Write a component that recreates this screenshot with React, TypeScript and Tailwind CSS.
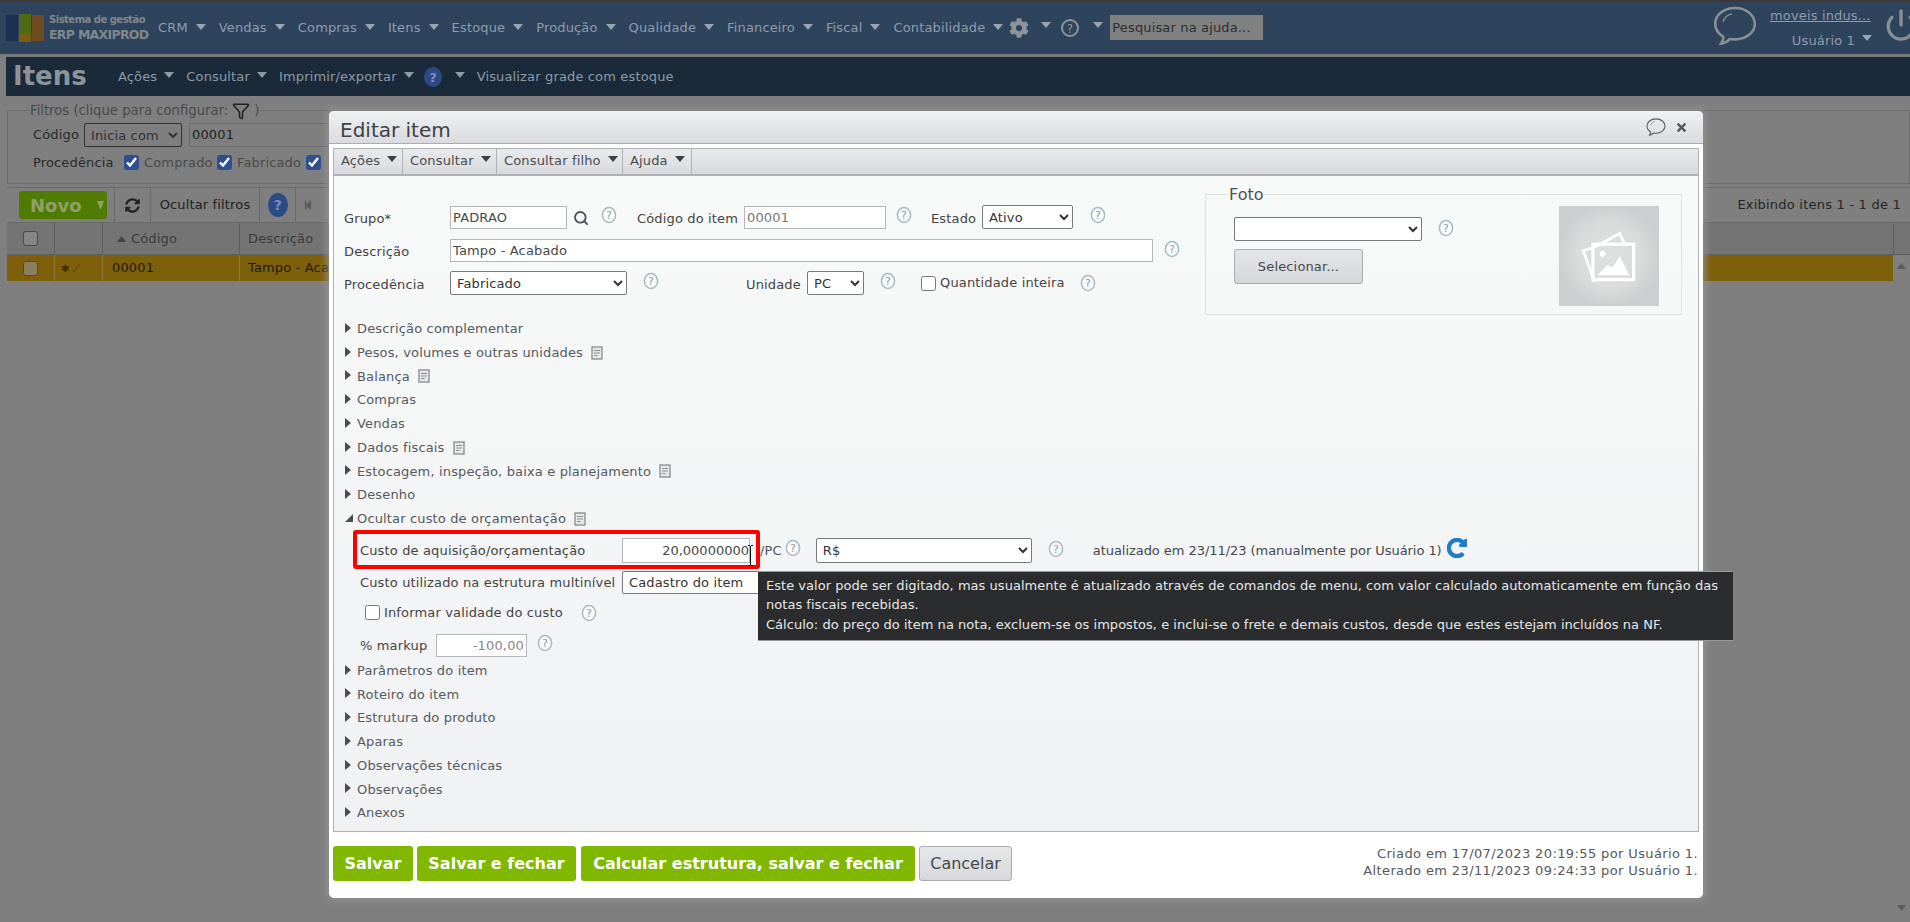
import React from "react";
import { FaCog, FaStepBackward, FaTimes, FaSyncAlt, FaRedoAlt } from "react-icons/fa";
import { Power, Search, Filter } from "lucide-react";

const Caret = ({ c = "#9aa5b0", w = 10, h = 6, className = "" }: { c?: string; w?: number; h?: number; className?: string }) => (
  <svg width={w} height={h} viewBox="0 0 10 6" preserveAspectRatio="none" className={"shrink-0 " + className}>
    <path d="M0 0H10L5 6Z" fill={c} />
  </svg>
);

const Help = ({ className = "" }: { className?: string }) => (
  <svg width="16" height="18" viewBox="0 0 16 18" className={"shrink-0 " + className}>
    <ellipse cx="8" cy="9" rx="6.6" ry="7.4" fill="#fbfcfc" stroke="#a6bac6" strokeWidth="1.5" />
    <text x="8" y="13" textAnchor="middle" fontSize="11" fill="#8f9aa0" fontFamily="DejaVu Sans">?</text>
  </svg>
);

const Doc = () => (
  <svg width="12" height="14" viewBox="0 0 12 14" className="ml-[8px] shrink-0">
    <rect x="1" y="1" width="10" height="12" fill="#e6e8e8" stroke="#8f9295" strokeWidth="1.4" />
    <path d="M3 4.5H9M3 7H9M3 9.5H6.5" stroke="#8f9295" strokeWidth="1" />
  </svg>
);

const Chat = ({ size, stroke, sw }: { size: number; stroke: string; sw: number }) => (
  <svg width={size} height={size * 0.9} viewBox="0 0 44 40" fill="none" className="shrink-0">
    <path d="M22 2C10.5 2 2 9 2 18c0 5.5 3.2 10 8 13 .5 2.5-.5 5-2 7 3.5-.5 7-2.5 9-4.7 1.6.3 3.3.4 5 .4 11.5 0 20-7 20-15.7S33.5 2 22 2Z" stroke={stroke} strokeWidth={sw} />
    <path d="M10 16c1-4 4-7 9-8" stroke={stroke} strokeWidth={sw * 0.5} />
  </svg>
);

const TopItem = ({ label }: { label: string }) => (
  <div className="flex items-center">
    <span>{label}</span>
    <Caret className="ml-[8px] -mt-[3px] mr-[13px]" />
  </div>
);

const MenuCell = ({ label, w }: { label: string; w: string }) => (
  <div className={"flex items-center pl-[7px] h-full border-r border-[#aeb1b5] " + w}>
    <span className="-mt-[2px]">{label}</span>
    <Caret c="#3c3f44" className="ml-[7px] -mt-[5px]" />
  </div>
);

const Row = ({ label, doc, open }: { label: string; doc?: boolean; open?: boolean }) => (
  <div className="flex items-center h-[23.75px] pl-[11px] text-[#555a5e]">
    <svg width="12" height="10" viewBox="0 0 12 10" className="shrink-0 -mt-[2px]">
      {open ? <path d="M0 9H8V1Z" fill="#4a4d50" /> : <path d="M0 0L6 5L0 10Z" fill="#4a4d50" />}
    </svg>
    <span>{label}</span>
    {doc && <Doc />}
  </div>
);

const inputCls = "h-full bg-white border border-[#b4b7ba] px-[2px] text-[#44484c] outline-none font-['DejaVu_Sans',sans-serif] text-[13px]";
const selectCls = "h-full bg-white border border-[#77797c] rounded-[2px] text-[#333] font-['DejaVu_Sans',sans-serif] text-[13px] pl-[2px]";
const dimBox = "h-[15px] w-[15px] appearance-none rounded-[3px] border border-[#4a4a4a] bg-[#868686]";

export default function App() {
  return (
    <div className="relative h-[922px] w-[1910px] overflow-hidden bg-[#7f7f7f] font-['DejaVu_Sans',sans-serif] text-[13px] tracking-[0.15px] text-[#2e3033]">
      {/* page behind the dialog */}
      <div className="h-[2px] bg-[#3b3837]" />
      <header className="flex h-[52px] items-center bg-[#2e435c] text-[#8e9cac]">
        <svg width="38" height="28" viewBox="0 0 38 28" className="ml-[6px] shrink-0">
          <rect x="0" y="1" width="12" height="26" fill="#1b2f52" />
          <rect x="13" y="0" width="12" height="20" fill="#4f6a14" />
          <rect x="13" y="20" width="12" height="8" fill="#7a5f12" />
          <rect x="26" y="1" width="12" height="26" fill="#6e4c20" />
        </svg>
        <div className="ml-[5px] w-[109px] shrink-0 whitespace-nowrap font-bold leading-none tracking-normal text-[#80888f]">
          <div className="mb-[4px] text-[10px] tracking-[-0.5px]">Sistema de gestão</div>
          <div className="text-[12.5px] tracking-[-0.7px]">ERP MAXIPROD</div>
        </div>
        <div className="flex shrink-0 items-center whitespace-nowrap">
          {["CRM", "Vendas", "Compras", "Itens", "Estoque", "Produção", "Qualidade", "Financeiro", "Fiscal", "Contabilidade"].map((l) => (
            <TopItem key={l} label={l} />
          ))}
        </div>
        <FaCog size={20} className="-ml-[7px] shrink-0 text-[#8e9498]" />
        <Caret className="ml-[12px] -mt-[6px]" />
        <svg width="20" height="20" viewBox="0 0 20 20" className="ml-[9px] shrink-0">
          <circle cx="10" cy="10" r="8" fill="none" stroke="#8e9498" strokeWidth="2" />
          <text x="10" y="14.5" textAnchor="middle" fontSize="12" fill="#8e9498" fontFamily="DejaVu Sans">?</text>
        </svg>
        <Caret className="ml-[13px] -mt-[6px]" />
        <div className="ml-[7px] -mt-[1px] flex h-[25px] w-[153px] shrink-0 items-center whitespace-nowrap bg-[#808080] pl-[2px] text-[#2c2f33]">Pesquisar na ajuda...</div>
        <div className="flex-1" />
        <div className="shrink-0 -mt-[4px]"><Chat size={44} stroke="#8a8f92" sw={2.6} /></div>
        <div className="ml-[13px] w-[102px] shrink-0 whitespace-nowrap">
          <div className="underline text-[#8e9ca9]">moveis indus...</div>
          <div className="mt-[5px] flex items-center justify-end">
            <span>Usuário 1</span>
            <Caret className="ml-[7px] -mt-[4px]" />
          </div>
        </div>
        <Power size={34} strokeWidth={2.4} className="ml-[12px] -mr-[8px] -mt-[6px] shrink-0 text-[#8a8f92]" />
      </header>
      <div className="h-[3px] bg-[#7a7a7a]" />
      <div className="ml-[6px] flex h-[39px] items-center bg-[#1a2a3a] text-[#8e9aa5]">
        <span className="ml-[7px] w-[105px] text-[26px] font-bold tracking-normal text-[#8c949a]">Itens</span>
        <span>Ações</span><Caret c="#8e9aa5" className="ml-[7px] -mt-[4px]" />
        <span className="ml-[12px]">Consultar</span><Caret c="#8e9aa5" className="ml-[7px] -mt-[4px]" />
        <span className="ml-[12px]">Imprimir/exportar</span><Caret c="#8e9aa5" className="ml-[7px] -mt-[4px]" />
        <svg width="18" height="20" viewBox="0 0 18 20" className="ml-[10px] shrink-0">
          <ellipse cx="9" cy="10" rx="9" ry="10" fill="#2c4a85" />
          <text x="9" y="15" textAnchor="middle" fontSize="13" fontWeight="700" fill="#7f8fb0" fontFamily="DejaVu Sans">?</text>
        </svg>
        <Caret c="#8e9aa5" className="ml-[13px] -mt-[4px]" />
        <span className="ml-[12px]">Visualizar grade com estoque</span>
      </div>

      <div className="ml-[7px]">
        <fieldset className="mt-[5px] h-[83px] border border-[#6c6c6c]">
          <legend className="ml-[21px] flex items-center px-[1px] text-[13.2px] leading-[19px] tracking-normal text-[#4a4a4a]">
            Filtros (clique para configurar: <Filter size={18} className="mx-[4px] text-[#222]" />)
          </legend>
          <div className="mt-[3px] flex h-[24px] items-center pl-[25px]">
            <span className="w-[51px] text-[#2a2a2a]">Código</span>
            <select className={selectCls + " w-[98px] !border-[#333] !bg-[#7f7f7f]"} defaultValue="a">
              <option value="a">Inicia com</option>
            </select>
            <div className="ml-[7px] h-full w-[141px] border border-[#6a6a6a] px-[2px] leading-[22px] text-[#222]">00001</div>
          </div>
          <div className="mt-[6px] flex items-center pl-[25px]">
            <span className="w-[91px] text-[#2a2a2a]">Procedência</span>
            <input type="checkbox" defaultChecked className="h-[15px] w-[15px] accent-[#2f4f8f]" />
            <span className="ml-[5px] w-[73px] text-[#4a4a4a]">Comprado</span>
            <input type="checkbox" defaultChecked className="h-[15px] w-[15px] accent-[#2f4f8f]" />
            <span className="ml-[5px] w-[69px] text-[#4a4a4a]">Fabricado</span>
            <input type="checkbox" defaultChecked className="h-[15px] w-[15px] accent-[#2f4f8f]" />
          </div>
        </fieldset>
        <div className="mt-[3px] flex h-[36px] items-center border-t border-b border-[#6a6a6a] pl-[12px]">
          <div className="flex h-[28px] w-[88px] items-center rounded-[3px] bg-[#4f7c00] pl-[11px] text-[18px] font-bold tracking-normal text-[#8f9f6a]">
            Novo
            <Caret c="#8f9f6a" w={7} h={9} className="ml-[15px]" />
          </div>
          <div className="ml-[7px] flex h-full w-[37px] items-center justify-center border-x border-[#6a6a6a]">
            <FaSyncAlt size={15} className="text-[#222]" />
          </div>
          <div className="flex h-full w-[109px] items-center justify-center border-r border-[#6a6a6a] text-[#222]">Ocultar filtros</div>
          <div className="flex h-full w-[36px] items-center justify-center border-r border-[#6a6a6a]">
            <svg width="20" height="24" viewBox="0 0 20 24"><ellipse cx="10" cy="12" rx="10" ry="12" fill="#2c4a85" /><text x="10" y="17" textAnchor="middle" fontSize="14" fontWeight="700" fill="#7f8fb0" fontFamily="DejaVu Sans">?</text></svg>
          </div>
          <FaStepBackward size={10} className="ml-[7px] text-[#5a5a5a]" />
          <span className="ml-auto mr-[9px] tracking-[0.22px] text-[#262626]">Exibindo itens 1 - 1 de 1</span>
        </div>
        <div className="flex h-[32px] items-center border-b border-[#5f5f5f] bg-[#747474] text-[#3a3a3a]">
          <div className="flex h-full w-[48px] items-center justify-center border-r border-[#5f5f5f]"><input type="checkbox" className={dimBox} /></div>
          <div className="h-full w-[48px] border-r border-[#5f5f5f]" />
          <div className="flex h-full w-[137px] items-center border-r border-[#5f5f5f] pl-[14px]"><Caret c="#444" w={9} h={6} className="mr-[5px] rotate-180" />Código</div>
          <div className="flex h-full flex-1 items-center pl-[8px]">Descrição</div>
          <div className="h-full w-[17px] border-l border-[#5f5f5f]" />
        </div>
        <div className="mr-[17px] flex h-[26px] items-center bg-[#7e5f0a] text-[#1f1a08]">
          <div className="flex h-full w-[48px] items-center justify-center border-r border-[#8f7a3a]"><input type="checkbox" className={dimBox + " !bg-[#8a7f60]"} /></div>
          <div className="flex h-full w-[48px] items-center border-r border-[#8f7a3a] pl-[6px] text-[10px] text-[#3a2c00]">✱ ⟋</div>
          <div className="flex h-full w-[137px] items-center border-r border-[#8f7a3a] pl-[9px]">00001</div>
          <div className="flex h-full flex-1 items-center pl-[8px]">Tampo - Acabado</div>
        </div>
      </div>
      <Caret c="#5c5c5c" w={9} h={6} className="absolute right-[4px] top-[263px] rotate-180" />
      <Caret c="#5c5c5c" w={9} h={6} className="absolute right-[4px] top-[905px]" />

      {/* dialog */}
      <div className="absolute left-[329px] top-[111px] flex h-[787px] w-[1374px] flex-col rounded-[5px] bg-white shadow-[0_0_7px_3px_rgba(150,150,150,0.75)]">
        <div className="flex h-[33px] items-center rounded-t-[5px] border-b border-[#a9adb1] bg-linear-to-b from-[#eff0f2] to-[#dadbde] pl-[11px]">
          <span className="mt-[6px] text-[20px] tracking-normal text-[#3e4146]">Editar item</span>
          <div className="ml-auto"><Chat size={20} stroke="#55585c" sw={2.4} /></div>
          <FaTimes size={13} className="ml-[9px] mr-[15px] text-[#55585c]" />
        </div>
        <div className="mx-[4px] mt-[4px] flex h-[684px] flex-col border border-[#adb2b6] bg-linear-to-b from-[#f8faf9] to-[#f0f1f3]">
          <div className="flex h-[27px] shrink-0 items-center border-b-2 border-[#aeb1b8] bg-linear-to-b from-[#e9eaec] to-[#d9dade] text-[#484c50]">
            <MenuCell label="Ações" w="w-[69px]" />
            <MenuCell label="Consultar" w="w-[94px]" />
            <MenuCell label="Consultar filho" w="w-[126px]" />
            <MenuCell label="Ajuda" w="w-[69px]" />
          </div>

          <div className="flex pt-[9px]">
            <div className="w-[871px] pt-[20px]">
              <div className="flex h-[24px] items-center">
                <span className="ml-[10px] w-[106px] pt-[4px] text-[#444]">Grupo*</span>
                <input readOnly value="PADRAO" className={inputCls + " !h-[23px] w-[117px]"} />
                <Search size={16} strokeWidth={2.8} className="ml-[6px] mt-[2px] text-[#4e5256]" />
                <Help className="ml-[12px] -mt-[4px]" />
                <span className="ml-[20px] w-[107px] pt-[4px] text-[#444]">Código do item</span>
                <input readOnly value="00001" className={inputCls + " !h-[23px] w-[142px] !text-[#777]"} />
                <Help className="ml-[10px] -mt-[4px]" />
                <span className="ml-[19px] w-[51px] pt-[4px] text-[#444]">Estado</span>
                <select className={selectCls + " w-[91px]"}><option>Ativo</option></select>
                <Help className="ml-[17px] -mt-[4px]" />
              </div>
              <div className="mt-[10px] flex h-[23px] items-center">
                <span className="ml-[10px] w-[106px] pt-[2px] text-[#444]">Descrição</span>
                <input readOnly value="Tampo - Acabado" className={inputCls + " w-[703px]"} />
                <Help className="ml-[11px] -mt-[4px]" />
              </div>
              <div className="mt-[9px] flex h-[24px] items-center">
                <span className="ml-[10px] w-[106px] pt-[3px] text-[#444]">Procedência</span>
                <select className={selectCls + " w-[177px]"}><option>Fabricado</option></select>
                <Help className="ml-[16px] -mt-[4px]" />
                <span className="ml-[87px] w-[61px] pt-[3px] text-[#444]">Unidade</span>
                <select className={selectCls + " w-[57px]"}><option>PC</option></select>
                <Help className="ml-[16px] -mt-[4px]" />
                <input type="checkbox" className="ml-[25px] h-[15px] w-[15px]" />
                <span className="ml-[4px] w-[140px] whitespace-nowrap text-[#444]">Quantidade inteira</span>
                <Help />
              </div>
            </div>
            <fieldset className="h-[130px] w-[477px] border border-[#dfe2e2]">
              <legend className="ml-[22px] px-[1px] text-[16px] leading-[19px] tracking-normal text-[#4c5054]">Foto</legend>
              <div className="flex">
                <div className="w-[353px] pl-[28px]">
                  <div className="mt-[13px] flex h-[24px] items-center">
                    <select className={selectCls + " w-[188px]"}><option></option></select>
                    <Help className="ml-[16px] -mt-[2px]" />
                  </div>
                  <div className="mt-[8px] flex h-[35px] w-[129px] items-center justify-center rounded-[3px] border border-[#a9abae] bg-linear-to-b from-[#e4e5e7] to-[#d6d7da] text-[#44484c]">Selecionar...</div>
                </div>
                <div className="mt-[2px] flex h-[100px] w-[100px] items-center justify-center bg-[radial-gradient(circle,#dedfdf_0%,#dadbdb_45%,#cdcecf_72%)]">
                  <svg width="60" height="54" viewBox="0 0 56 50" fill="none">
                    <path d="M14 17 L4 20 L14 48 L20 46 M14 17 L38 4 L42 13" stroke="#fff" strokeWidth="2.6" />
                    <rect x="13" y="14" width="38" height="33" stroke="#fff" strokeWidth="3" />
                    <circle cx="22" cy="23" r="2.8" fill="#fff" />
                    <path d="M17 43 L27 33 L31 36 L38 25 L47 43Z" fill="#fff" />
                  </svg>
                </div>
              </div>
            </fieldset>
          </div>

          <div className="mt-[2px]">
            <Row label="Descrição complementar" />
            <Row label="Pesos, volumes e outras unidades" doc />
            <Row label="Balança" doc />
            <Row label="Compras" />
            <Row label="Vendas" />
            <Row label="Dados fiscais" doc />
            <Row label="Estocagem, inspeção, baixa e planejamento" doc />
            <Row label="Desenho" />
            <Row label="Ocultar custo de orçamentação" doc open />
          </div>

          <div className="relative mt-[7px] flex h-[25px] items-center">
            <span className="ml-[26px] w-[262px] text-[#444]">Custo de aquisição/orçamentação</span>
            <input readOnly value="20,00000000" className={inputCls + " w-[128px] !pr-0 text-right tracking-normal"} />
            <span className="ml-[10px] text-[#555]">/PC</span>
            <Help className="ml-[3px] -mt-[4px]" />
            <select className={selectCls + " ml-[15px] w-[216px]"}><option>R$</option></select>
            <Help className="ml-[16px] -mt-[2px]" />
            <span className="ml-[29px] whitespace-nowrap tracking-[-0.05px] text-[#44484c]">atualizado em 23/11/23 (manualmente por Usuário 1)</span>
            <FaRedoAlt size={20} stroke="currentColor" strokeWidth={30} className="ml-[5px] -mt-[4px] text-[#1d7ec9]" />
            <div className="absolute left-[19px] -top-[8px] h-[39px] w-[407px] rounded-[3px] border-4 border-[#fe0000]" />
            <svg width="7" height="21" viewBox="0 0 7 21" className="absolute left-[413px] top-[7px]">
              <path d="M1 .5H3M4 .5H6M3.5 1V20M1 20.5H3M4 20.5H6" stroke="#111" strokeWidth="1" fill="none" />
            </svg>
          </div>

          <div className="relative mt-[8px] flex h-[23px] items-center">
            <span className="ml-[26px] w-[262px] text-[#444]">Custo utilizado na estrutura multinível</span>
            <select className={selectCls + " w-[215px]"}><option>Cadastro do item</option></select>
            <div className="absolute left-[424px] top-0 z-10 h-[70px] w-[975px] border-y border-[#9a9a9a] bg-[#2a2c2e] px-[8px] pt-[4px] leading-[19.5px] tracking-[0.03px] text-[#e6e8e8]">
              Este valor pode ser digitado, mas usualmente é atualizado através de comandos de menu, com valor calculado automaticamente em função das notas fiscais recebidas.
              <br />
              Cálculo: do preço do item na nota, excluem-se os impostos, e inclui-se o frete e demais custos, desde que estes estejam incluídos na NF.
            </div>
          </div>

          <div className="mt-[11px] flex h-[16px] items-center">
            <input type="checkbox" className="ml-[31px] h-[15px] w-[15px]" />
            <span className="ml-[4px] w-[197px] text-[#444]">Informar validade do custo</span>
            <Help />
          </div>

          <div className="mt-[13px] flex h-[23px] items-center">
            <span className="ml-[26px] w-[76px] text-[#444]">% markup</span>
            <input readOnly value="-100,00" className={inputCls + " w-[91px] text-right !text-[#888]"} />
            <Help className="ml-[10px] -mt-[4px]" />
          </div>

          <div className="mt-[2px]">
            <Row label="Parâmetros do item" />
            <Row label="Roteiro do item" />
            <Row label="Estrutura do produto" />
            <Row label="Aparas" />
            <Row label="Observações técnicas" />
            <Row label="Observações" />
            <Row label="Anexos" />
          </div>
        </div>
        <div className="mx-[4px] mt-[14px] flex h-[35px] items-center text-[16px] tracking-normal">
          <button className="h-full w-[80px] rounded-[3px] bg-[#80b800] font-bold text-white">Salvar</button>
          <button className="ml-[4px] h-full w-[159px] rounded-[3px] bg-[#80b800] font-bold text-white">Salvar e fechar</button>
          <button className="ml-[5px] h-full w-[334px] rounded-[3px] bg-[#80b800] font-bold text-white">Calcular estrutura, salvar e fechar</button>
          <button className="ml-[4px] h-full w-[93px] rounded-[3px] border border-[#a9abae] bg-linear-to-b from-[#e6e7e9] to-[#d7d8db] text-[#44484c]">Cancelar</button>
          <div className="ml-auto mr-[1px] -mt-[3px] text-right text-[13px] leading-[17px] tracking-[0.38px] text-[#55585c]">
            Criado em 17/07/2023 20:19:55 por Usuário 1.
            <br />
            Alterado em 23/11/2023 09:24:33 por Usuário 1.
          </div>
        </div>
      </div>
    </div>
  );
}
